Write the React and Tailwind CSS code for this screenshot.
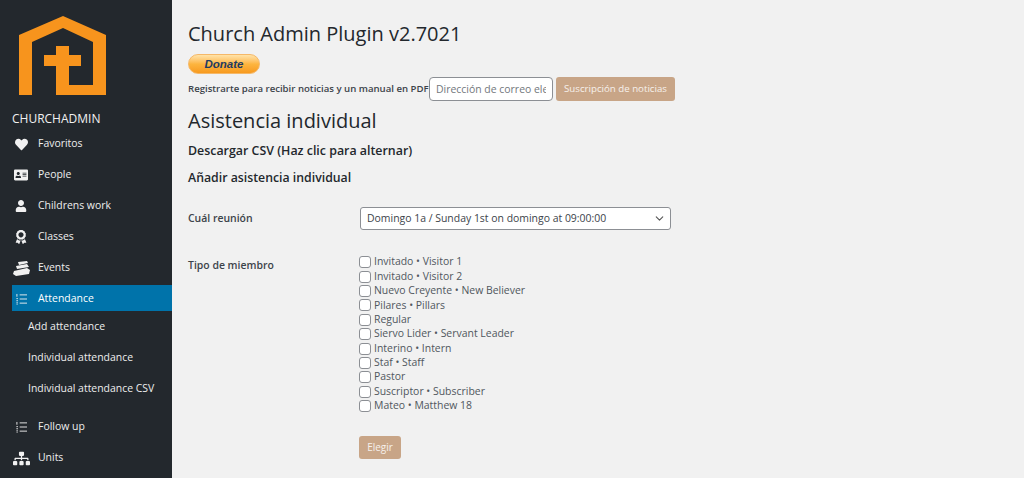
import React from 'react';
import { FaHeart, FaAddressCard, FaUser, FaAward, FaSitemap } from 'react-icons/fa';
import { ChevronDown } from 'lucide-react';

const Logo = () => (
    <svg width="88" height="80" viewBox="0 0 88 80" className="block">
        <path
            fill="#f7941d"
            d="M44 0 L87 19 L87 79 L37 79 L37 50 L25 50 L25 39 L37 39 L37 30 L50 30 L50 39 L62 39 L62 50 L50 50 L50 69 L74 69 L74 26 L44 12 L13 26 L13 79 L0 79 L0 19 Z"
        />
    </svg>
);

const Books = () => (
    <svg width="17" height="15" viewBox="0 0 17 15" fill="#f1f1f1">
        <path d="M5 1 L14 0 L15 2 L6 4 Z" />
        <path d="M3 5 L14 3 L16 6 L4 8 Z" />
        <path d="M1 10 L14 7 L17 9 L16 13 L3 15 L0 13 Z" />
    </svg>
);

// thin numbered list, the icon packages only have a heavier one
const ListIcon = () => (
    <svg width="11" height="12" viewBox="0 0 12 12" fill="none" stroke="#f1f1f1" strokeWidth="1">
        <path d="M1 0.5 V3.5 M0.5 5.5 H2 M0.5 7.5 H2 M0.5 9.5 H2 M0.5 11.5 H2" />
        <path d="M4 1.5 H12 M4 6 H12 M4 10.5 H12" />
    </svg>
);

const topItems = [
    { label: 'Favoritos', icon: <FaHeart size={13} /> },
    { label: 'People', icon: <FaAddressCard size={14} /> },
    { label: 'Childrens work', icon: <FaUser size={12} /> },
    { label: 'Classes', icon: <FaAward size={14} /> },
    { label: 'Events', icon: <Books /> },
];

const subItems = ['Add attendance', 'Individual attendance', 'Individual attendance CSV'];

const members = [
    'Invitado • Visitor 1',
    'Invitado • Visitor 2',
    'Nuevo Creyente • New Believer',
    'Pilares • Pillars',
    'Regular',
    'Siervo Lider • Servant Leader',
    'Interino • Intern',
    'Staf • Staff',
    'Pastor',
    'Suscriptor • Subscriber',
    'Mateo • Matthew 18',
];

const NavRow = ({ icon, label, active }) => (
    <div className={`flex items-center h-[26px] pt-[2px] mb-[5px] ml-3 ${active ? 'bg-[#0073aa] text-white' : 'text-[#eeeeee]'}`}>
        <span className="w-[18px] mr-[8px] flex justify-center text-[#f1f1f1]">{icon}</span>
        <span>{label}</span>
    </div>
);

const App = () => {
    return (
        <div className="flex w-[1024px] h-[478px] overflow-hidden bg-[#f1f1f1] text-[10.45px] font-['Open_Sans',sans-serif]">
            <aside className="w-[172px] shrink-0 bg-[#23282d] pt-4">
                <div className="pl-[19px]">
                    <Logo />
                </div>
                <div className="ml-3 mt-[15px] text-[12px] leading-[16px] font-medium text-[#f1f1f1]">CHURCHADMIN</div>
                <nav className="mt-[3px]">
                    {topItems.map((item) => (
                        <NavRow key={item.label} icon={item.icon} label={item.label} />
                    ))}
                    <NavRow icon={<ListIcon />} label="Attendance" active />
                    <div className="-mt-[5px] mb-[9px]">
                        {subItems.map((s) => (
                            <div key={s} className="h-[31px] pl-[28px] flex items-center text-[#eeeeee]">{s}</div>
                        ))}
                    </div>
                    <NavRow icon={<ListIcon />} label="Follow up" />
                    <NavRow icon={<FaSitemap size={17} />} label="Units" />
                </nav>
            </aside>

            <main className="flex-1 pl-4 pt-[21px] text-[#3c434a]">
                <h1 className="text-[20px] leading-[26px] font-medium text-[#23282d]">Church Admin Plugin v2.7021</h1>
                <button className="mt-[7px] block w-[72px] h-[20px] rounded-full border border-[#f5b868] bg-gradient-to-b from-[#ffe3a8] via-[#fdb53f] to-[#f79a1e] text-[11.5px] leading-[16px] font-bold italic text-[#1f3b63] font-['Liberation_Sans',sans-serif]">
                    Donate
                </button>
                <div className="mt-[3px] flex items-center h-[24px]">
                    <span className="text-[9.6px] font-semibold w-[241px] whitespace-nowrap">Registrarte para recibir noticias y un manual en PDF</span>
                    <input
                        className="w-[124px] h-[24px] rounded-[4px] border border-[#8c8f94] bg-white px-[6px] text-[10.45px] placeholder:text-[#72777c] outline-none"
                        placeholder="Dirección de correo electrónico"
                    />
                    <button className="ml-[3px] h-[24px] w-[119px] rounded-[3px] bg-[#c8a587] text-[9.7px] text-[#f7f1ec]">Suscripción de noticias</button>
                </div>
                <h2 className="mt-[7px] text-[20px] leading-[26px] font-medium text-[#23282d]">Asistencia individual</h2>
                <h3 className="mt-[8px] text-[12.4px] leading-[18px] font-semibold text-[#23282d]">Descargar CSV (Haz clic para alternar)</h3>
                <h3 className="mt-[9px] text-[12.3px] leading-[18px] font-semibold text-[#23282d]">Añadir asistencia individual</h3>

                <div className="mt-[20px] flex items-center">
                    <label className="w-[172px] font-semibold">Cuál reunión</label>
                    <div className="relative w-[311px] h-[23px] rounded-[3px] border border-[#8c8f94] bg-white pl-[6px] flex items-center">
                        Domingo 1a / Sunday 1st on domingo at 09:00:00
                        <ChevronDown size={13} className="absolute right-[4px] top-[4px] text-[#555555]" />
                    </div>
                </div>

                <div className="mt-[25px] flex">
                    <label className="w-[171px] font-semibold leading-[20px]">Tipo de miembro</label>
                    <div>
                        {members.map((m) => (
                            <div key={m} className="flex items-center h-[14.4px] text-[#50575e]">
                                <span className="w-[12px] h-[12px] mr-[3px] rounded-[3px] border border-[#8c8f94] bg-white shrink-0" />
                                {m}
                            </div>
                        ))}
                        <button className="mt-[23px] block w-[42px] h-[23px] rounded-[3px] bg-[#c8a587] text-[10px] text-[#f7f1ec]">Elegir</button>
                    </div>
                </div>
            </main>
        </div>
    );
};

export default App;
